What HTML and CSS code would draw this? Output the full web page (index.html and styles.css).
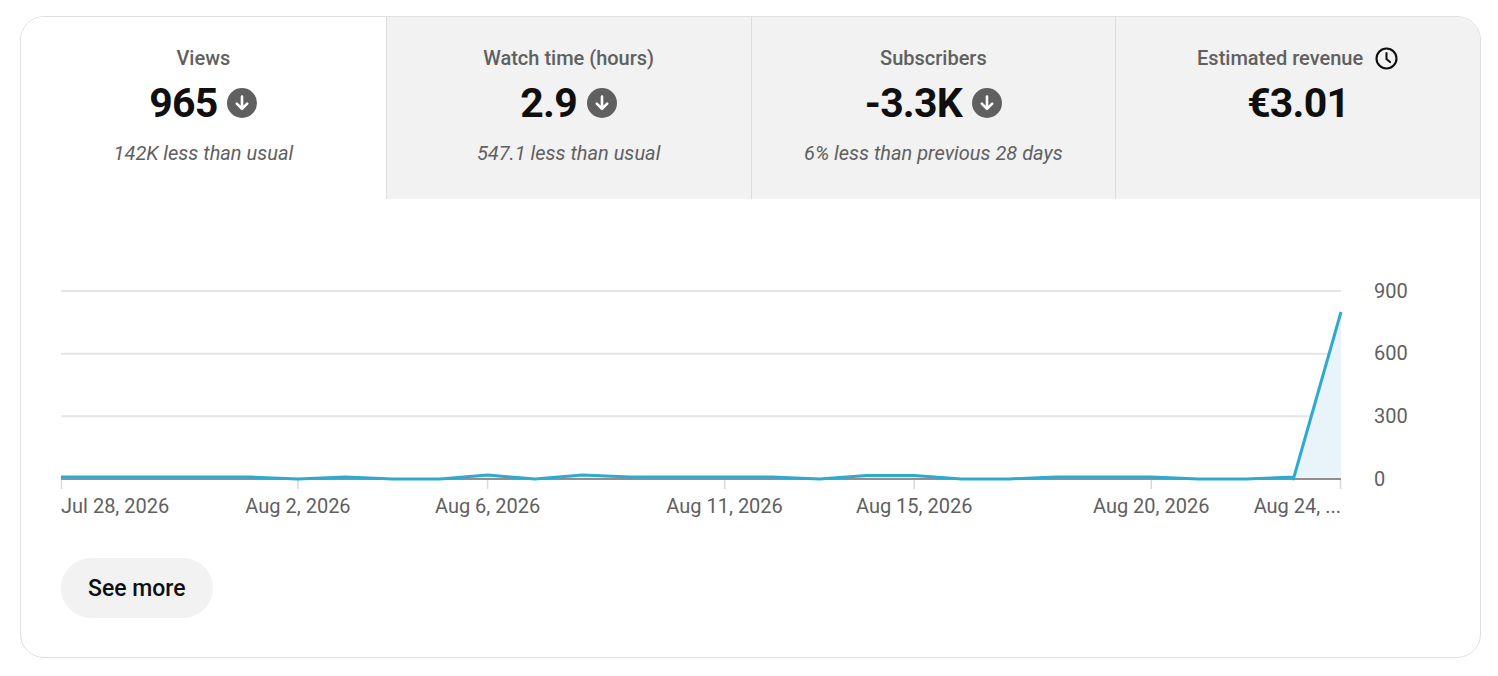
FILE: index.html
```html
<!DOCTYPE html>
<html lang="en">
<head>
<meta charset="utf-8">
<title>Channel analytics</title>
<link rel="stylesheet" href="styles.css">
</head>
<body>
<div class="page">
  <section class="card">
    <div class="tabs">
      <div class="tab selected">
        <div class="tab-label">Views</div>
        <div class="tab-value">965 <span class="trend"><svg viewBox="0 0 30 30" width="30" height="30"><circle cx="15" cy="15" r="15" fill="#606060"/><path d="M15 8.5v12M9.8 15.6l5.2 5.2 5.2-5.2" stroke="#fff" stroke-width="2.6" fill="none" stroke-linecap="round" stroke-linejoin="round"/></svg></span></div>
        <div class="tab-sub">142K less than usual</div>
      </div>
      <div class="tab">
        <div class="tab-label">Watch time (hours)</div>
        <div class="tab-value">2.9 <span class="trend"><svg viewBox="0 0 30 30" width="30" height="30"><circle cx="15" cy="15" r="15" fill="#606060"/><path d="M15 8.5v12M9.8 15.6l5.2 5.2 5.2-5.2" stroke="#fff" stroke-width="2.6" fill="none" stroke-linecap="round" stroke-linejoin="round"/></svg></span></div>
        <div class="tab-sub">547.1 less than usual</div>
      </div>
      <div class="tab">
        <div class="tab-label">Subscribers</div>
        <div class="tab-value">-3.3K <span class="trend"><svg viewBox="0 0 30 30" width="30" height="30"><circle cx="15" cy="15" r="15" fill="#606060"/><path d="M15 8.5v12M9.8 15.6l5.2 5.2 5.2-5.2" stroke="#fff" stroke-width="2.6" fill="none" stroke-linecap="round" stroke-linejoin="round"/></svg></span></div>
        <div class="tab-sub">6% less than previous 28 days</div>
      </div>
      <div class="tab">
        <div class="tab-label">Estimated revenue <span class="clock"><svg viewBox="0 0 24 24" width="25" height="25"><circle cx="12" cy="12" r="9.6" stroke="#0f0f0f" stroke-width="2" fill="none"/><path d="M12 6.8v5.6l3.4 3" stroke="#0f0f0f" stroke-width="2" fill="none" stroke-linecap="round" stroke-linejoin="round"/></svg></span></div>
        <div class="tab-value">€3.01</div>
      </div>
    </div>

    <div class="chart">
      <svg class="chart-svg" viewBox="0 0 1381 260" width="1381" height="260">
        <g class="grid">
          <line x1="0" y1="21" x2="1280" y2="21"/>
          <line x1="0" y1="83.7" x2="1280" y2="83.7"/>
          <line x1="0" y1="146.3" x2="1280" y2="146.3"/>
        </g>
        <polygon class="area" points="0,207 47.4,207 94.8,207 142.2,207 189.6,207 237,209 284.4,207 331.8,209 379.2,209 426.6,205 474,209 521.4,205 568.8,207 616.2,207 663.6,207 711,207 758.4,209 805.8,205.5 853.2,205.5 900.6,209 948,209 995.4,207 1042.8,207 1090.2,207 1137.6,209 1185,209 1232.4,207 1232.4,209 1280,42 1280,209 0,209"/>
        <line class="baseline" x1="0" y1="209" x2="1280" y2="209"/>
        <g class="ticks">
          <line x1="0.5" y1="210" x2="0.5" y2="219"/>
          <line x1="237" y1="210" x2="237" y2="219"/>
          <line x1="426.6" y1="210" x2="426.6" y2="219"/>
          <line x1="663.6" y1="210" x2="663.6" y2="219"/>
          <line x1="853.2" y1="210" x2="853.2" y2="219"/>
          <line x1="1090.2" y1="210" x2="1090.2" y2="219"/>
          <line x1="1279.5" y1="210" x2="1279.5" y2="219"/>
        </g>
        <polyline class="line" points="0,207 47.4,207 94.8,207 142.2,207 189.6,207 237,209 284.4,207 331.8,209 379.2,209 426.6,205 474,209 521.4,205 568.8,207 616.2,207 663.6,207 711,207 758.4,209 805.8,205.5 853.2,205.5 900.6,209 948,209 995.4,207 1042.8,207 1090.2,207 1137.6,209 1185,209 1232.4,207 1232.4,209 1280,42"/>
        <g class="xlabels">
          <text x="0" y="243" text-anchor="start">Jul 28, 2026</text>
          <text x="237" y="243" text-anchor="middle">Aug 2, 2026</text>
          <text x="426.6" y="243" text-anchor="middle">Aug 6, 2026</text>
          <text x="663.6" y="243" text-anchor="middle">Aug 11, 2026</text>
          <text x="853.2" y="243" text-anchor="middle">Aug 15, 2026</text>
          <text x="1090.2" y="243" text-anchor="middle">Aug 20, 2026</text>
          <text x="1280" y="243" text-anchor="end">Aug 24, ...</text>
        </g>
        <g class="ylabels">
          <text x="1313" y="28">900</text>
          <text x="1313" y="90">600</text>
          <text x="1313" y="153">300</text>
          <text x="1313" y="216">0</text>
        </g>
      </svg>
    </div>

    <div class="actions">
      <button class="see-more" type="button">See more</button>
    </div>
  </section>
</div>
</body>
</html>
```

FILE: styles.css
```css
* { box-sizing: border-box; }

html, body {
  margin: 0;
  padding: 0;
  background: #ffffff;
}

body {
  font-family: Roboto, "Liberation Sans", Arial, sans-serif;
  color: #0f0f0f;
}

.page {
  padding: 16px 17px 18px 20px;
}

.card {
  border: 1px solid #e0e0e0;
  border-radius: 24px;
  overflow: hidden;
  background: #fff;
  padding-bottom: 39px;
}

.tabs {
  display: grid;
  grid-template-columns: repeat(4, 1fr);
  height: 182px;
}

.tab {
  background: #f2f2f2;
  border-left: 1px solid #dcdcdc;
  display: flex;
  flex-direction: column;
  align-items: center;
  padding-top: 29px;
}

.tab:first-child { border-left: none; }

.tab.selected { background: #ffffff; }

.tab-label {
  font-size: 20px;
  font-weight: 500;
  color: #606060;
  line-height: 24px;
  height: 24px;
  display: flex;
  align-items: center;
  gap: 11px;
}

.clock {
  display: inline-flex;
  width: 25px;
  height: 25px;
}

.tab-value {
  margin-top: 9px;
  font-size: 41px;
  font-weight: 700;
  letter-spacing: -0.8px;
  line-height: 48px;
  height: 48px;
  display: flex;
  align-items: center;
  gap: 10px;
  color: #0f0f0f;
}

.trend {
  display: inline-flex;
  width: 30px;
  height: 30px;
  letter-spacing: 0;
}

.tab-sub {
  margin-top: 14px;
  font-size: 20px;
  font-style: italic;
  color: #606060;
  line-height: 24px;
}

.chart {
  padding: 71px 40px 0 40px;
  height: 331px;
}

.chart-svg {
  display: block;
  overflow: visible;
}

.grid line {
  stroke: #e5e5e5;
  stroke-width: 2;
}

.baseline {
  stroke: #909090;
  stroke-width: 2;
}

.ticks line {
  stroke: #d9d9d9;
  stroke-width: 1.5;
}

.area {
  fill: #e8f4fa;
}

.line {
  fill: none;
  stroke: #2fa9cf;
  stroke-width: 3;
  stroke-linejoin: round;
}

.xlabels text,
.ylabels text {
  font-family: Roboto, "Liberation Sans", Arial, sans-serif;
  font-size: 20px;
  fill: #606060;
}

.actions {
  padding: 28px 40px 0 40px;
}

.see-more {
  font-family: Roboto, "Liberation Sans", Arial, sans-serif;
  font-size: 23px;
  font-weight: 500;
  color: #0f0f0f;
  background: #f2f2f2;
  border: none;
  border-radius: 30px;
  height: 60px;
  padding: 0 27px;
  cursor: pointer;
}
```
